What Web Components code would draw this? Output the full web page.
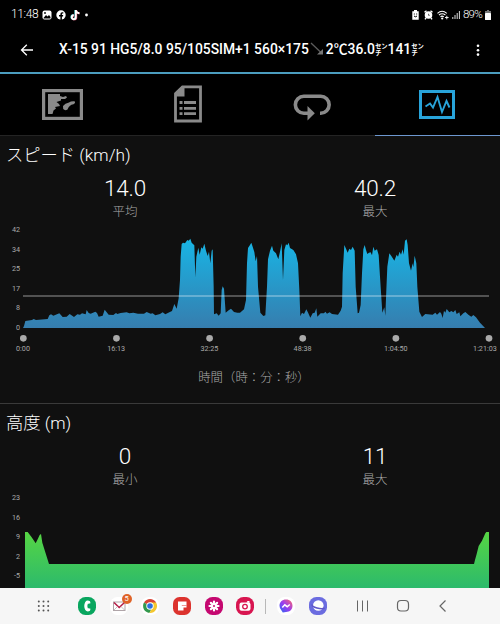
<!DOCTYPE html>
<html lang="ja">
<head>
<meta charset="utf-8">
<title>アクティビティ</title>
<style>
  html, body { margin: 0; background: #101010; }
  body {
    width: 500px;
    height: 624px;
    overflow: hidden;
    font-family: Roboto, "Noto Sans CJK JP", sans-serif;
    color: #fff;
  }
  .unit { font-size: 12.6px; }
</style>
</head>
<body>

<template id="x-app-template">
  <style>
    :host { display: flex; flex-direction: column; height: 624px; }
    .content { flex: 1; min-height: 0; overflow: hidden; background: #101010; }
  </style>
  <slot name="top"></slot>
  <div class="content"><slot></slot></div>
  <slot name="bottom"></slot>
</template>

<template id="x-status-bar-template">
  <style>
    :host { display: flex; align-items: center; justify-content: space-between; height: 29px; background: #000; padding: 0 9px 0 11px; font-size: 12px; font-weight: 300; line-height: 29px; }
    .group { display: flex; align-items: center; }
    .time { width: 31px; letter-spacing: -.35px; }
    .left svg { margin-right: 4px; }
    .right svg { margin-right: 3px; }
    .level { font-size: 11.5px; letter-spacing: -.8px; width: 22px; }
    .right svg:last-child { margin: 0; }
  </style>
  <div class="group left">
    <span class="time">11:48</span>
    <svg width="10" height="10" viewBox="0 0 10 10"><rect x=".5" y=".5" width="9" height="9" rx="2" fill="#fff"/><path d="M1.5 8L4 5L5.5 6.5L7 5L8.5 7V8.5H1.5Z" fill="#000"/><circle cx="3" cy="3" r=".9" fill="#000"/></svg>
    <svg width="10" height="10" viewBox="0 0 10 10"><circle cx="5" cy="5" r="4.7" fill="#fff"/><path d="M4.4 10V6.4H3V5H4.4V4Q4.4 2.2 6.2 2.2H7.3V3.5H6.5Q5.9 3.5 5.9 4.2V5H7.2L7 6.4H5.9V10Z" fill="#000"/></svg>
    <svg width="10" height="12" viewBox="0 0 10 12"><g fill="none" stroke-width="1.9"><path d="M5.3 1V8A2 2 0 1 1 3.4 6M5.3 1.5Q6 4 9 4.2" stroke="#40c4cc"/><path d="M6.3 1.3V8.4A2 2 0 1 1 4.3 6.4M6.3 1.8Q7 4.3 9.7 4.4" stroke="#d43c60"/><path d="M5.8 1V8.2A2 2 0 1 1 3.8 6.2M5.8 1.4Q6.4 4 9.4 4.2" stroke="#fff"/></g></svg>
    <svg width="6" height="10" viewBox="0 0 6 10"><circle cx="2.500" cy="5" r="1.4" fill="#fff"/></svg>
  </div>
  <div class="group right">
    <svg style="margin-right:5px" width="7" height="10" viewBox="0 0 7 10"><path d="M2 0H5V1.2H6.7V9.7H.3V1.2H2Z" fill="#fff"/><path d="M1.8 4H2.8M4.2 4H5.2M2 6Q3.5 7.6 5 6" stroke="#000" fill="none"/></svg>
    <svg style="margin-right:4px" width="9" height="10" viewBox="0 0 9 10"><circle cx="4.5" cy="5" r="3.8" fill="#fff"/><path d="M.5 2.3L2.5.8M8.5 2.3L6.5.8M1 9.4L2 8M8 9.4L7 8" stroke="#fff" stroke-width="1.4"/><path d="M4.5 3.8V5.3H5.8" stroke="#444" stroke-width=".8" fill="none"/></svg>
    <svg width="12" height="10" viewBox="0 0 12 10"><path d="M.5 3.3Q5 -.8 9.8 3.3M2 5Q5 2.4 8.4 5M3.5 6.8Q5 5.5 6.8 6.8" fill="none" stroke="#fff" stroke-width="1.1"/><circle cx="5.2" cy="8.5" r="1.1" fill="#fff"/><path d="M8 7.5H11.6M9.8 5.8V9.3" stroke="#fff" stroke-width=".9"/></svg>
    <svg width="8" height="10" viewBox="0 0 8 10"><path d="M.8 9V7M3 9V5M5.2 9V3M7.4 9V1" stroke="#ddd" stroke-width="1"/></svg>
    <span class="level">89%</span>
    <svg width="6" height="10" viewBox="0 0 6 10"><path d="M2 0H4V1H6V3H0V1H2Z" fill="#777"/><rect y="3" width="6" height="7" rx=".5" fill="#fff"/></svg>
  </div>
</template>

<template id="x-app-bar-template">
  <style>
    :host { display: flex; align-items: center; padding: 0 20px; box-sizing: border-box; width: 500px; height: 45px; border-bottom: 2px solid #4b9dbf; background: #000; }
    .title { flex: 1; display: flex; align-items: center; margin: 0 0 3px 25px; font-size: 13.86px; font-weight: 500; white-space: nowrap; line-height: 20px; }
    svg { flex: none; }
  </style>
  <svg width="14" height="14" viewBox="0 0 14 14" fill="none" stroke="#fff" stroke-width="1.3"><path d="M13 6H1.6M6.8 .8L1.5 6L6.8 11.3"/></svg>
  <div class="title"><slot></slot></div>
  <svg width="4" height="14" viewBox="0 0 4 14" fill="#fff"><circle cx="2" cy="1.8" r="1.3"/><circle cx="2" cy="6.2" r="1.3"/><circle cx="2" cy="10.6" r="1.3"/></svg>
</template>

<template id="x-trend-template">
  <style>:host { display: inline-flex; margin: 0 2px 0 1px; }</style>
  <svg width="14" height="14" viewBox="0 0 14 14"><path d="M1 1L11 10.5" stroke="#5c5c5c" stroke-width="1.3"/><path d="M13 12.5H7L13 7Z" fill="#777"/></svg>
</template>

<template id="x-tabs-template">
  <style>
    :host { display: grid; grid-template-columns: repeat(4, 1fr); height: 62px; background: #000; }
    div { display: flex; justify-content: center; align-items: center; border-bottom: 1px solid #242424; }
    .active { border-color: #6d97cf; }
  </style>
  <div>
    <svg width="43" height="41" viewBox="0 0 43 41"><rect x="2.600" y="6.600" width="37.800" height="27.800" fill="none" stroke="#8a8a8a" stroke-width="3.200"/><path d="M7 10H19V12L22 13L25 12L26 13.500L24 15H20V16.500L15.500 18L18 20L19 22L14 23L15 24.500L12.500 26.500L11.500 30H7Z" fill="#8a8a8a"/><path d="M22 22Q24 19 28 18.500Q30 17 33.500 17.300Q35 19 32.500 20.300Q28 21 26.500 25.500Q24 27 22.200 25Z" fill="#8a8a8a"/></svg>
  </div>
  <div>
    <svg width="31" height="41" viewBox="-1 0 31 41"><path d="M9.500 2.800H27.500V37H2.500V9.500Z" fill="none" stroke="#8a8a8a" stroke-width="2.800"/><path d="M11.500 2V12.500H2V9L9 2Z" fill="#8a8a8a"/><path d="M6.500 18.500H9.500M11 18.500H23M6.500 24.300H9.500M11 24.300H23M6.500 29.700H9.500M11 29.700H23" stroke="#8a8a8a" stroke-width="2.800"/></svg>
  </div>
  <div>
    <svg width="41" height="41" viewBox="0 0 41 41"><path d="M17 29.200H11.800A8.450 8.450 0 0 1 11.800 12.300H28.700A8.450 8.450 0 0 1 28.700 29.200H28" fill="none" stroke="#8a8a8a" stroke-width="3.600"/><path d="M15.500 22V36.500L22.800 29.200Z" fill="#8a8a8a"/></svg>
  </div>
  <div class="active">
    <svg width="39" height="41" viewBox="0 0 39 41"><rect x="2.500" y="7.500" width="33" height="26" fill="none" stroke="#28a4da" stroke-width="3"/><path d="M7.500 22.500L12 19.500L15 23.500L19.500 13L24 28L28.500 17L31.500 23.500" fill="none" stroke="#28a4da" stroke-width="1.900"/></svg>
  </div>
</template>

<template id="x-metric-template">
  <style>
    :host { display: flex; flex-direction: column; height: 268px; box-sizing: border-box; border-bottom: 1px solid #3a3a3a; }
    h2 { margin: 0; padding-left: 6px; height: 38px; line-height: 39px; font-size: 17.3px; font-weight: 300; }
    .stats { display: flex; }
  </style>
  <h2><slot name="heading"></slot></h2>
  <div class="stats"><slot name="stat"></slot></div>
  <slot></slot>
</template>

<template id="x-stat-template">
  <style>
    :host { flex: 1; display: flex; flex-direction: column; align-items: center; }
    .value { height: 28px; line-height: 28px; font-size: 22.5px; font-weight: 300; letter-spacing: -.2px; }
    .label { height: 18px; line-height: 19px; font-size: 12.5px; font-weight: 300; color: #aaa; }
  </style>
  <span class="value"><slot></slot></span>
  <span class="label"></span>
</template>

<template id="x-area-chart-template">
  <style>
    :host { display: block; color: #aaa; font-size: 7.2px; }
    .plot { display: grid; grid-template-columns: 20px 480px; }
    .y { display: flex; flex-direction: column; align-items: flex-end; }
    .y span { height: 19.6px; line-height: 20px; }
    .x { display: flex; justify-content: space-between; padding: 0 15px 0 23px; height: 11px; line-height: 11px; }
    .x span { width: 0; display: flex; justify-content: center; white-space: nowrap; }
    .x span:last-child { margin-left: -4px; }
    .caption { margin: 14px 0 0 8px; text-align: center; font-size: 12.4px; font-weight: 300; line-height: 20px; }
    svg { display: block; }
    .x[hidden], .caption[hidden] { display: none; }
  </style>
  <div class="plot">
    <div class="y"></div>
    <svg width="480">
      <defs><linearGradient id="fill" gradientUnits="userSpaceOnUse" x1="0" x2="0"><stop/><stop offset="1"/></linearGradient></defs>
      <polygon fill="url(#fill)"/>
      <g class="marks"></g>
    </svg>
  </div>
  <div class="x"></div>
  <div class="caption"><slot></slot></div>
</template>

<template id="x-nav-bar-template">
  <style>
    :host { display: flex; align-items: center; height: 36px; padding: 0 48px 0 34px; background: #f6f6f6; }
    .apps { display: flex; gap: 13.7px; }
    .recents { margin-left: 25px; }
    .item { position: relative; width: 18px; height: 18px; }
    .badge { position: absolute; left: 12px; top: -3px; width: 10px; height: 10px; border-radius: 50%; background: #df6328; color: #fff; font-size: 7.5px; line-height: 10px; text-align: center; }
    .divider { width: 1px; height: 15px; background: #b8b8b8; margin: 0 11px 0 10.5px; }
    .keys { flex: 1; display: flex; justify-content: space-between; margin-left: 27px; }
    svg { display: block; overflow: visible; }
  </style>
  <svg width="19" height="18" viewBox="0 0 19 18" fill="none" stroke="#555" stroke-width="2" stroke-linecap="round" stroke-dasharray="0 4.700"><path d="M4.800 4.500H15M4.800 9H15M4.800 13.500H15"/></svg>
  <div class="apps recents">
    <svg width="18" height="18"><rect width="18" height="18" rx="7.500" fill="#09a65f"/><path d="M12 4.200L12.500 6.300Q11 7 9.800 6.700Q8.800 9 9.800 11.300Q11 11 12.500 11.700L12 13.800Q9 15.500 7.300 13Q5.200 9 7.300 5Q9 2.500 12 4.200Z" fill="#fff"/></svg>
    <div class="item">
      <svg width="18" height="18"><rect width="18" height="18" rx="7.500" fill="#fff"/><rect x="3.500" y="5" width="11.500" height="8.500" fill="#fff" stroke="#b0a5a9" stroke-width="1"/><path d="M4 5.500L9.200 10.500L14.500 5.500" fill="none" stroke="#b51d47" stroke-width="1.500"/><path d="M4 13L7.500 9.500M14.500 13L11 9.500" stroke="#aaa" stroke-width=".7"/></svg>
      <span class="badge">5</span>
    </div>
    <svg width="18" height="18"><rect width="18" height="18" rx="8" fill="#fff"/><path d="M9 9L3 5.600A7 7 0 0 1 15.100 5.600Z" fill="#d84335"/><path d="M9 9L3 5.600A7 7 0 0 0 8.400 16L11 11Z" fill="#32984d"/><path d="M9 5.600H15.100A7 7 0 0 1 8.400 16L11.500 10.500Z" fill="#f4c72e"/><circle cx="9" cy="9" r="3.700" fill="#fff"/><circle cx="9" cy="9" r="2.800" fill="#2c70df"/></svg>
    <svg width="18" height="18"><rect width="18" height="18" rx="6.500" fill="#dc332e"/><path d="M5 4.500H13.500V10.500H10.500V13.500H5Z" fill="#fff"/><path d="M8.800 8.500H13.500" stroke="#dc332e" stroke-width=".5"/></svg>
    <svg width="18" height="18"><rect width="18" height="18" rx="7.500" fill="#c50870"/><g stroke="#fff" stroke-width="2.200" stroke-linecap="round"><path d="M9 4.500V13.500M4.500 9H13.500M5.900 5.900L12.100 12.100M12.100 5.900L5.900 12.100"/></g><circle cx="9" cy="9" r="1" fill="#c50870"/></svg>
    <svg width="18" height="18"><rect width="18" height="18" rx="7.500" fill="#d81550"/><rect x="3.500" y="5.500" width="11" height="8.300" rx="2" fill="#fff"/><path d="M10.500 5.500L11.500 4H13.500V6Z" fill="#fff"/><circle cx="9" cy="9.600" r="2.300" fill="none" stroke="#d81550" stroke-width="1.300"/></svg>
  </div>
  <span class="divider"></span>
  <div class="apps">
    <svg width="18" height="18"><defs><linearGradient id="chat" x1="0" y1="1" x2="1" y2="0"><stop stop-color="#246af2"/><stop offset=".5" stop-color="#9b3cf0"/><stop offset="1" stop-color="#ff6a68"/></linearGradient></defs><rect width="18" height="18" rx="7.500" fill="#fff"/><path d="M9 2.500C13 2.500 15.500 5.200 15.500 8.800S13 15 9 15L5.800 15.600L4.500 13.500Q2.500 11.700 2.500 8.800C2.500 5.200 5 2.500 9 2.500Z" fill="url(#chat)"/><path d="M5.300 10.500L7.800 7.800L10.200 9.700L12.800 7.500" fill="none" stroke="#fff" stroke-width="1.500"/></svg>
    <svg width="18" height="18"><rect width="18" height="18" rx="7.500" fill="#6b6ce0"/><circle cx="9.300" cy="8.500" r="5.300" fill="#fff"/><path d="M3.200 7.500Q2.500 9.500 8 11Q14 12.500 15.500 10.700" fill="none" stroke="#6058c8" stroke-width="1.600"/></svg>
  </div>
  <div class="keys">
    <svg width="18" height="18"><path d="M3.500 3.500V14.500M8.500 3.500V14.500M13.500 3.500V14.500" stroke="#666" stroke-width="1"/></svg>
    <svg width="18" height="18"><rect x="3.500" y="3.500" width="11" height="10.500" rx="3.500" fill="none" stroke="#666" stroke-width="1.200"/></svg>
    <svg width="18" height="18"><path d="M11.500 3.500L6 9L11.500 14.500" fill="none" stroke="#666" stroke-width="1.200"/></svg>
  </div>
</template>

<x-app>
  <x-status-bar slot="top"></x-status-bar>
  <x-app-bar slot="top"><span>X-15 91 HG5/8.0 95/105SIM+1 560×175</span><x-trend></x-trend><span>2℃36.0<span class="unit">㌢</span>141<span class="unit">㌢</span></span></x-app-bar>
  <x-tabs slot="top"></x-tabs>

  <x-metric>
    <span slot="heading">スピード (km/h)</span>
    <x-stat slot="stat" label="平均">14.0</x-stat>
    <x-stat slot="stat" label="最大">40.2</x-stat>
    <x-area-chart series="speed">時間（時：分：秒）</x-area-chart>
  </x-metric>
  <x-metric>
    <span slot="heading">高度 (m)</span>
    <x-stat slot="stat" label="最小">0</x-stat>
    <x-stat slot="stat" label="最大">11</x-stat>
    <x-area-chart series="altitude"></x-area-chart>
  </x-metric>

  <x-nav-bar slot="bottom"></x-nav-bar>
</x-app>

<script>
  // Samples are in thirds of a pixel; each run starts at its own x offset
  const series = {
    speed: {
      y: [42, 34, 25, 17, 8, 0],
      x: ["0:00", "16:13", "32:25", "48:38", "1:04:50", "1:21:03"],
      height: 369,
      top: 56,
      base: 324,
      colors: ["#18b5e5", "#367dae"],
      average: 228,
      runs: [
        [0, "69,324 72,318 76,303 96,300 101,297 108,300 143,297 148,286 153,283 160,287 178,280 188,291 200,290 209,282 222,291 232,283 240,284 246,280 257,283 260,270 266,279 272,281 286,275 291,279 296,290 308,287 314,269 326,284 340,285 348,279 352,282 362,279 380,277 388,280 400,278 414,281 432,281 440,276 452,281 458,280 466,286 480,282 488,277 496,283 505,278 516,273 523,252 530,266 536,235 540,180 542,110 545,72 549,68 555,70 562,60 566,62 571,56 575,68 583,76 586,172 589,110 595,83 599,104 604,82 608,86 613,71 618,92 623,108 627,95 631,130 635,92 638,88 641,200 642,283 650,280 656,287 662,280 665,210 668,199 672,206 677,278 686,271 693,266 702,276 712,278 720,278 732,268 738,240 741,130 744,84"],
        [750, "0,75 4,68 8,80 13,96 17,124 21,108 24,200 31,278 40,288 46,286 51,200 54,118 60,92 66,77 70,92 78,100 85,118 90,95 95,70 99,180 103,90 108,73 112,76 116,68 120,84 130,90 138,103 144,130 148,210 151,289 156,278 162,282 169,268 175,280 181,293 188,280 194,278 199,265 202,290 212,280 222,280 226,275 231,281 239,277 246,282 264,284 272,272 276,260 278,160 283,75 288,86 293,98 298,86 303,90 308,80 314,92 317,200 323,280 327,278 332,255 336,160 340,88 344,75 348,90 352,102 357,98 362,97 366,106 370,80 374,92 381,88 386,105 390,170 397,278 403,262 406,287 409,210 412,140 418,100 424,108 433,122 440,104 444,110 449,95 453,104 458,88 461,104 465,62 470,58 473,75 477,130 483,152 488,130 490,142 494,107 499,130 502,200 508,275 516,291 526,282 548,284 556,278 561,284 570,276 574,281 578,294 582,272 586,278 590,267 598,277 604,273 610,277 616,270 620,282 628,277 631,289 640,280 646,276 656,285 664,290 670,285 678,292 690,308 705,324"],
      ],
    },
    altitude: {
      y: [23, 16, 9, 2, -5],
      x: [],
      height: 300,
      top: 132,
      base: 300,
      colors: ["#56d543", "#2cba6c"],
      runs: [
        [0, "75,300 75,132 83,132 95,148 107,166 113,154 119,141 123,138 127,164 147,228"],
        [750, "672,228 675,216 680,198 686,174 696,158 706,136 709,132 717,132 717,300"],
      ],
    },
  };

  class TemplateElement extends HTMLElement {
    connectedCallback() {
      const template = document.getElementById(this.nodeName.toLowerCase() + "-template");
      this.attachShadow({ mode: "open" }).appendChild(template.content.cloneNode(true));
      this.render();
    }
    render() {}
  }

  ["x-app", "x-status-bar", "x-app-bar", "x-trend", "x-tabs", "x-metric", "x-nav-bar"].forEach(
    (name) => customElements.define(name, class extends TemplateElement {})
  );

  customElements.define("x-stat", class extends TemplateElement {
    render() {
      this.shadowRoot.querySelector(".label").textContent = this.getAttribute("label");
    }
  });

  customElements.define("x-area-chart", class extends TemplateElement {
    render() {
      const data = series[this.getAttribute("series")];
      const find = (selector) => this.shadowRoot.querySelector(selector);
      const labels = (list) => list.map((text) => `<span>${text}</span>`).join("");

      find(".y").innerHTML = labels(data.y);
      find(".x").innerHTML = labels(data.x);
      find(".x").hidden = !data.x.length;
      find(".caption").hidden = !this.textContent;

      const svg = find("svg");
      svg.setAttribute("height", data.height / 3);
      svg.setAttribute("viewBox", `60 0 1440 ${data.height}`);
      const gradient = find("linearGradient");
      gradient.setAttribute("y1", data.top);
      gradient.setAttribute("y2", data.base);
      this.shadowRoot.querySelectorAll("stop").forEach(
        (stop, i) => stop.setAttribute("stop-color", data.colors[i])
      );
      find("polygon").setAttribute("points", data.runs.flatMap(([start, points]) =>
        points.split(" ").map((point) => {
          const [x, y] = point.split(",").map(Number);
          return `${x + start},${y}`;
        })
      ).join(" "));

      if (data.average) {
        find(".marks").innerHTML =
          `<rect x="69" y="${data.average - 3}" width="1398" height="6" fill="#fff" fill-opacity=".28"/>` +
          data.x.map((_, i) => `<circle cx="${70 + i * 279.4}" cy="355" r="10" fill="#aaa"/>`).join("");
      }
    }
  });
</script>
</body>
</html>
